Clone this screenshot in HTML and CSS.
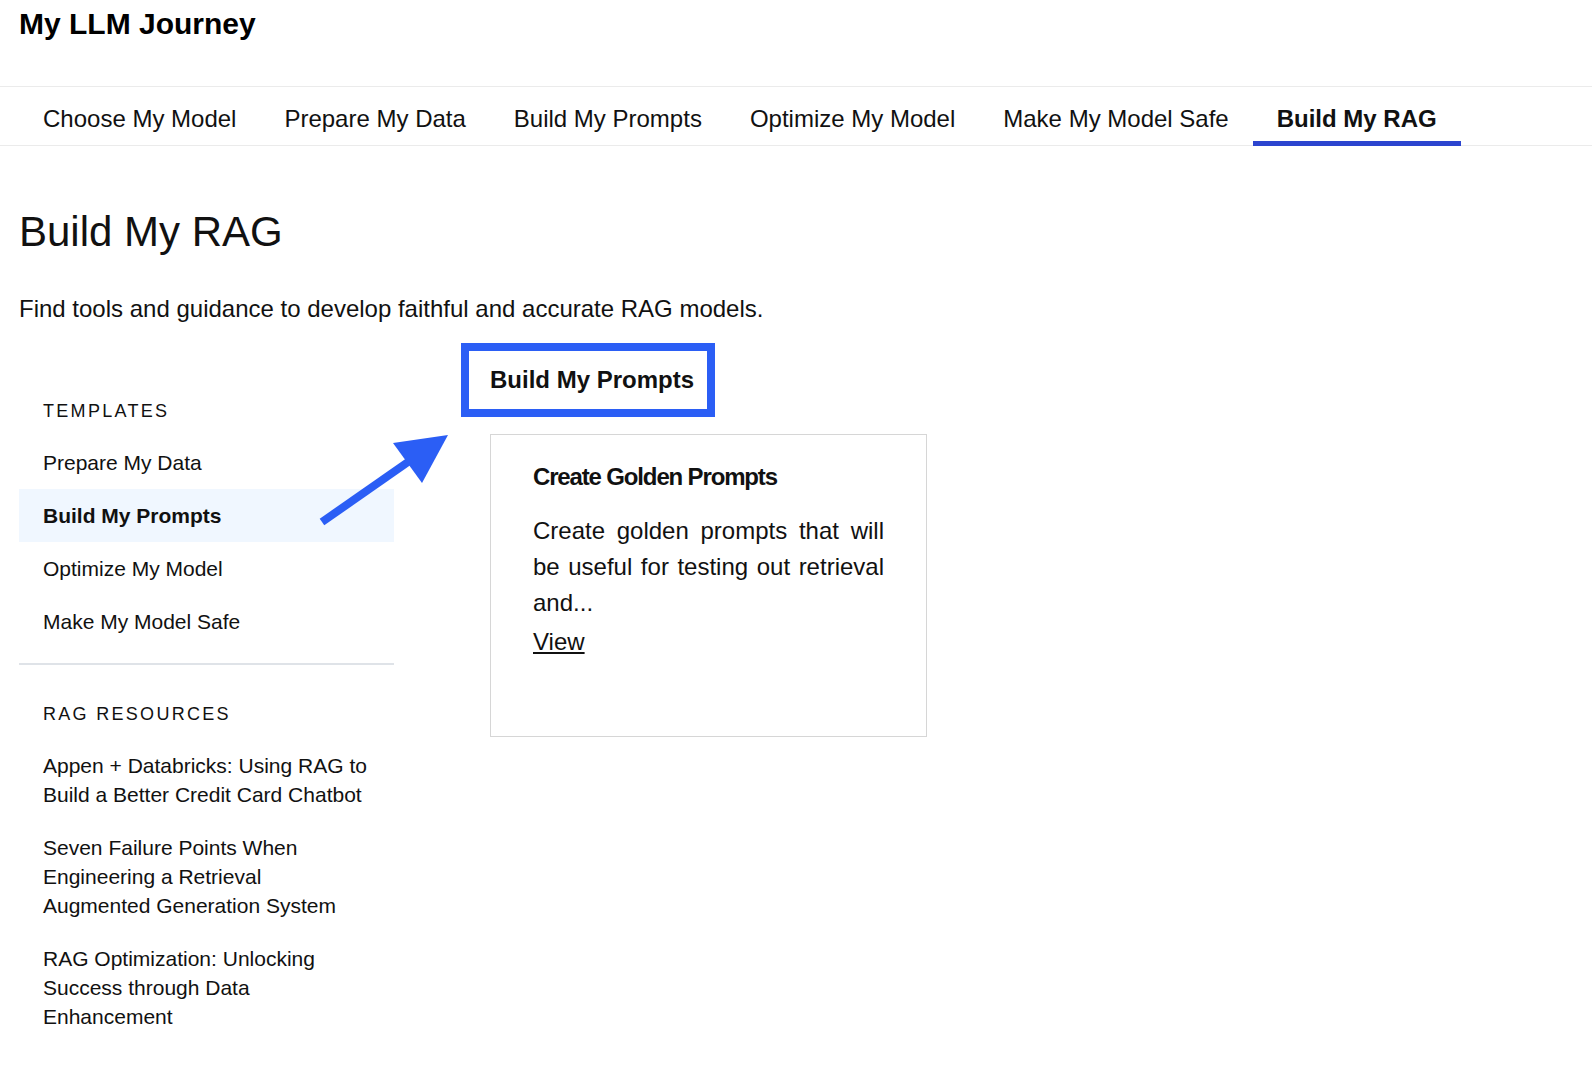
FILE: index.html
```html
<!DOCTYPE html>
<html lang="en">
<head>
  <meta charset="UTF-8">
  <meta name="viewport" content="width=device-width, initial-scale=1.0">
  <title>My LLM Journey</title>
  <link rel="stylesheet" href="styles.css">
</head>
<body>
  <header class="site-header">
    <div class="brand">My LLM Journey</div>
  </header>

  <nav class="tabs">
    <a class="tab" href="#">Choose My Model</a>
    <a class="tab" href="#">Prepare My Data</a>
    <a class="tab" href="#">Build My Prompts</a>
    <a class="tab" href="#">Optimize My Model</a>
    <a class="tab" href="#">Make My Model Safe</a>
    <a class="tab active" href="#">Build My RAG</a>
  </nav>

  <main class="page">
    <h1 class="page-title">Build My RAG</h1>
    <p class="page-intro">Find tools and guidance to develop faithful and accurate RAG models.</p>

    <div class="layout">
      <aside class="sidebar">
        <div class="side-group">
          <h3 class="side-label">Templates</h3>
          <a class="side-link" href="#">Prepare My Data</a>
          <a class="side-link current" href="#">Build My Prompts</a>
          <a class="side-link" href="#">Optimize My Model</a>
          <a class="side-link" href="#">Make My Model Safe</a>
        </div>
        <div class="side-group">
          <h3 class="side-label">RAG Resources</h3>
          <a class="side-link" href="#">Appen + Databricks: Using RAG to Build a Better Credit Card Chatbot</a>
          <a class="side-link" href="#">Seven Failure Points When Engineering a Retrieval Augmented Generation System</a>
          <a class="side-link" href="#">RAG Optimization: Unlocking Success through Data Enhancement</a>
        </div>
      </aside>

      <section class="templates">
        <h2 class="section-title">Build My Prompts</h2>
        <div class="card">
          <h4 class="card-title">Create Golden Prompts</h4>
          <p class="card-text">Create golden prompts that will be useful for testing out retrieval and...</p>
          <a class="card-link" href="#">View</a>
        </div>
      </section>

      <!-- annotation arrow pointing at the section title -->
      <svg class="pointer" viewBox="0 0 150 110" aria-hidden="true">
        <line x1="12" y1="97" x2="98" y2="37" stroke="#2b5ef5" stroke-width="8"/>
        <polygon points="83,18 138,10 112,58" fill="#2b5ef5"/>
      </svg>
    </div>
  </main>
</body>
</html>
```

FILE: styles.css
```css
body {
  margin: 0;
  font-family: "Liberation Sans", Arial, Helvetica, sans-serif;
  color: #111;
  background-color: #fff;
}

a {
  color: inherit;
}

.site-header {
  height: 86px;
  box-sizing: border-box;
  padding: 6px 19px 0;
}

.brand {
  font-size: 30px;
  line-height: 36px;
  font-weight: 700;
  color: #000;
}

.tabs {
  display: flex;
  padding: 0 19px;
  border-top: 1px solid #ebebeb;
  border-bottom: 1px solid #ebebeb;
}

.tab {
  padding: 18px 24px 8px;
  margin-bottom: -1px;
  font-size: 24px;
  line-height: 28px;
  text-decoration: none;
  border-bottom: 5px solid transparent;
}

.tab.active {
  font-weight: 700;
  border-bottom-color: #2c45cf; /* active tab underline */
}

.page {
  padding: 0 19px;
}

.page-title {
  margin: 61px 0 0;
  font-size: 42px;
  line-height: 50px;
  font-weight: 400;
}

.page-intro {
  margin: 38px 0 0;
  font-size: 24px;
  line-height: 28px;
}

.layout {
  position: relative;
  display: flex;
  gap: 96px;
  margin-top: 20px;
  padding-bottom: 40px;
}

.sidebar {
  flex: none;
  width: 375px;
}

.side-group {
  padding: 38px 0 15px;
}

.side-group:first-child {
  padding-top: 57px;
  border-bottom: 2px solid #dfe3e8;
}

.side-label {
  margin: 0 0 14px;
  padding-left: 24px;
  font-size: 18px;
  line-height: 22px;
  font-weight: 400;
  letter-spacing: 2.3px;
  text-transform: uppercase;
}

.side-link {
  display: block;
  padding: 12px 24px;
  font-size: 21px;
  line-height: 29px;
  text-decoration: none;
}

.side-link.current {
  background-color: #f0f7ff; /* light blue for the open template */
  font-weight: 700;
}

.templates {
  flex: none;
  width: 437px;
}

.section-title {
  width: fit-content;
  margin: 0 0 17px -29px;
  padding: 14px 13px 15px 21px;
  border: 8px solid #2b5ef5;
  font-size: 24px;
  line-height: 29px;
  font-weight: 700;
}

.card {
  min-height: 303px;
  box-sizing: border-box;
  padding: 28px 42px;
  border: 1px solid #d6d6d6;
}

.card-title {
  margin: 0 0 22px;
  font-size: 24px;
  line-height: 28px;
  font-weight: 700;
  letter-spacing: -1.15px;
}

.card-text {
  margin: 0;
  font-size: 24px;
  line-height: 36px;
  text-align: justify;
}

.card-link {
  display: inline-block;
  margin-top: 3px;
  font-size: 24px;
  line-height: 36px;
}

.pointer {
  position: absolute;
  left: 291px;
  top: 82px;
  width: 150px;
  height: 110px;
}
```
